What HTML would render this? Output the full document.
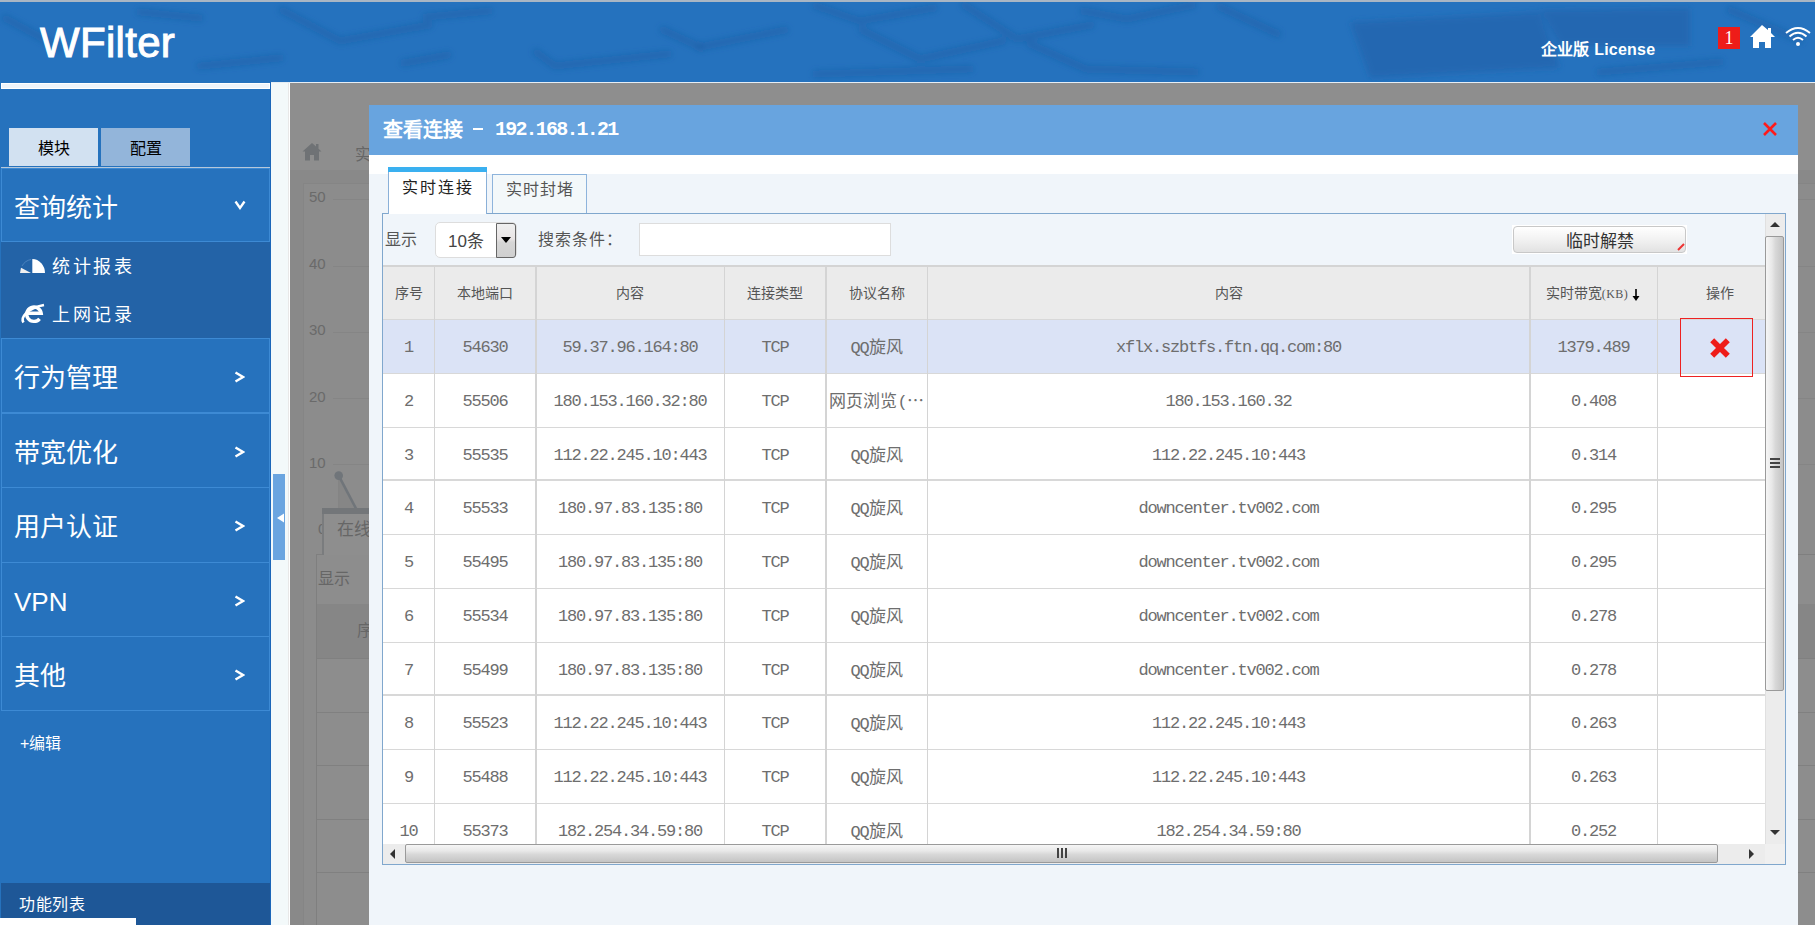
<!DOCTYPE html>
<html lang="zh-CN"><head><meta charset="utf-8">
<style>
*{box-sizing:border-box;margin:0;padding:0}
html,body{width:1815px;height:925px;overflow:hidden;background:#fff;font-family:"Liberation Sans",sans-serif}
.a{position:absolute}
#topline{left:0;top:0;width:1815px;height:2px;background:#a9b6c4}
#hdr{left:0;top:2px;width:1815px;height:80px;background:#2572be;overflow:hidden}
#logo{left:40px;top:16px;font:42px/50px "Liberation Sans",sans-serif;color:#fff;-webkit-text-stroke:1px #fff;letter-spacing:0.3px}
#lic{left:1541px;top:38px;font:bold 16px/20px "Liberation Sans",sans-serif;color:#fff;letter-spacing:0.2px}
#badge{left:1718px;top:25px;width:22px;height:22px;background:#ee1c19;color:#fff;font:18px/22px "Liberation Serif",serif;text-align:center}
#side{left:0;top:82px;width:271px;height:843px;background:#2672bd}
#side .edge{left:270px;top:0;width:1px;height:843px;background:#1c66b8}
#wbar{left:1px;top:1px;width:269px;height:6px;background:#eef4fa;border:1px solid #fff}
.stab{top:46px;height:38px;font-size:16px;line-height:42px;text-align:center;color:#000}
.mi{left:1px;width:269px;border:1px solid #3d8ad4;color:#fff;font-size:26px}
.mi .t{left:12px;top:3px;line-height:72px;white-space:nowrap}
.mi svg{position:absolute}
#sub{left:1px;top:160px;width:269px;height:96px;background:#2363a7}
.si{left:52px;font-size:18px;color:#fff;letter-spacing:2.5px;line-height:20px}
#gray{left:290px;top:83px;width:1525px;height:842px;background:#898989;overflow:hidden;z-index:0}
#strip{left:271px;top:82px;width:19px;height:843px;background:#f3f9fa}
#handle{left:273px;top:474px;width:12px;height:86px;background:#6ba5e0}
#dlg{left:369px;top:105px;width:1429px;height:820px;background:#f0f5fa}
#dtitle{left:0;top:0;width:1429px;height:50px;background:#68a4df;color:#fff}
#dwhite{left:0;top:50px;width:1429px;height:19px;background:#fff}
#panel{left:13px;top:108px;width:1404px;height:652px;border:1px solid #80a7cd;background:#f0f5fa}
#tbl{left:383px;top:265px;width:1382px;height:579px;overflow:hidden;background:#fff}
.th{position:absolute;top:2px;height:52px;line-height:52px;text-align:center;font-size:14px;color:#555;white-space:nowrap}
.tr{position:absolute;left:0;width:1382px;height:53.74px;border-top:1px solid #d8d8d8;background:#fff}
.tr.hl{background:#dbe3f6}
.td{position:absolute;height:53.74px;line-height:57px;text-align:center;color:#6e6e6e;white-space:nowrap;overflow:hidden}
.td{font-family:"Liberation Mono",monospace;font-size:17px;letter-spacing:-1.2px}
.td u{text-decoration:none;letter-spacing:0;font-size:17px;font-family:"Liberation Sans",sans-serif}
.vl{position:absolute;top:2px;height:600px;width:1px;background:#d4d4d4}
.kb{font:12px "Liberation Serif",serif;letter-spacing:0.5px}
</style></head><body>
<div id="topline" class="a"></div>
<div id="hdr" class="a">
  <svg class="a" style="left:0;top:-2px" width="1815" height="84" viewBox="0 0 1815 84">
    <defs><filter id="bl" x="-5%" y="-50%" width="110%" height="200%"><feGaussianBlur stdDeviation="3.2"/></filter></defs>
    <g filter="url(#bl)" stroke="#1a5598" stroke-opacity="0.38" stroke-width="7" fill="none" stroke-linecap="round" stroke-linejoin="round"><path d="M5 18 L60 48"/><path d="M140 12 L200 18"/><path d="M200 66 L280 58"/><path d="M282 10 L340 41 L429 25"/><path d="M426 17 L489 11"/><path d="M404 63 L448 55"/><path d="M536 52 L555 66 L668 54"/><path d="M663 30 L700 47"/><path d="M700 47 L785 30"/><path d="M816 6 L860 21 L934 8"/><path d="M862 30 L920 59 L1003 41"/><path d="M964 5 L1017 39 L1091 25"/><path d="M1083 11 L1127 19 L1193 5"/><path d="M1030 44 L1086 69 L1196 72"/><path d="M816 74 L970 69"/><path d="M1220 7 L1278 34"/><path d="M1600 72 L1720 62"/><path d="M1730 10 L1800 40"/></g>
    <g filter="url(#bl)" fill="#1d5ea6" fill-opacity="0.5"><path d="M1350 22 L1540 12 L1560 68 L1370 78 Z"/><path d="M1540 10 L1690 8 L1690 46 L1560 46 Z"/></g>
  </svg>
  <div id="logo" class="a">WFilter</div>
  <div id="lic" class="a">企业版 License</div>
  <div id="badge" class="a">1</div>
  <svg class="a" style="left:1749px;top:21px" width="27" height="26" viewBox="0 0 27 26">
    <path d="M13 2 L1 14 L4 14 L4 25 L10 25 L10 19 L16 19 L16 25 L22 25 L22 14 L26 14 L22 10 L22 5 L19 5 L19 7 Z" fill="#fff"/>
  </svg>
  <svg class="a" style="left:1784px;top:23px" width="28" height="22" viewBox="0 0 28 22">
    <path d="M2 8 Q14 -2 26 8" stroke="#fff" stroke-width="1.9" fill="none"/>
    <path d="M5.5 11.5 Q14 4 22.5 11.5" stroke="#fff" stroke-width="1.9" fill="none"/>
    <path d="M9 15 Q14 10.5 19 15" stroke="#fff" stroke-width="1.9" fill="none"/>
    <circle cx="14" cy="19" r="2" fill="#fff"/>
  </svg>
</div>

<div id="side" class="a">
  <div class="a edge"></div>
  <div id="wbar" class="a"></div>
  <div class="a stab" style="left:9px;width:89px;background:#d2e1f1">模块</div>
  <div class="a stab" style="left:101px;width:89px;background:#93b5da">配置</div>
  <div class="a" style="left:1px;top:85px;width:269px;height:1px;background:#b6c8da"></div>
  <div class="a mi" style="top:86px;height:74px"><div class="a t">查询统计</div>
    <svg style="left:232px;top:31px" width="12" height="10"><polyline points="1.5,1.5 6,8 10.5,1.5" stroke="#fff" stroke-width="2.3" fill="none"/></svg></div>
  <div id="sub" class="a"></div>
  <div class="a si" style="top:175px">统计报表</div>
  <svg class="a" style="left:15px;top:168px" width="35" height="80" viewBox="15 250 35 80">
    <path d="M32.3 273 V259 A13 14 0 0 1 45 273 Z" fill="#fff"/>
    <path d="M20 273 L21 267.8 L31 273 Z" fill="#f0f0f0"/>
    <path d="M22 266 A13 14 0 0 1 31 259.5" stroke="#5b8fc7" stroke-width="0.7" fill="none"/>
    <path d="M27.2 313.2 H41.2 A7.3 7.2 0 1 0 39.6 318.8" stroke="#fff" stroke-width="3.4" fill="none"/>
    <path d="M23.5 322.5 C20.5 318 26 308.5 44 305" stroke="#fff" stroke-width="2.6" fill="none"/>
  </svg>
  <div class="a si" style="top:223px">上网记录</div>
  
  <div class="a mi" style="top:256px;height:75px"><div class="a t">行为管理</div>
    <svg style="left:232px;top:32px" width="11" height="12"><polyline points="1.5,1.5 9,6 1.5,10.5" stroke="#fff" stroke-width="2.4" fill="none"/></svg></div>
  <div class="a mi" style="top:331px;height:75px"><div class="a t">带宽优化</div>
    <svg style="left:232px;top:32px" width="11" height="12"><polyline points="1.5,1.5 9,6 1.5,10.5" stroke="#fff" stroke-width="2.4" fill="none"/></svg></div>
  <div class="a mi" style="top:405px;height:76px"><div class="a t">用户认证</div>
    <svg style="left:232px;top:32px" width="11" height="12"><polyline points="1.5,1.5 9,6 1.5,10.5" stroke="#fff" stroke-width="2.4" fill="none"/></svg></div>
  <div class="a mi" style="top:480px;height:75px"><div class="a t">VPN</div>
    <svg style="left:232px;top:32px" width="11" height="12"><polyline points="1.5,1.5 9,6 1.5,10.5" stroke="#fff" stroke-width="2.4" fill="none"/></svg></div>
  <div class="a mi" style="top:554px;height:75px"><div class="a t">其他</div>
    <svg style="left:232px;top:32px" width="11" height="12"><polyline points="1.5,1.5 9,6 1.5,10.5" stroke="#fff" stroke-width="2.4" fill="none"/></svg></div>
  <div class="a" style="left:20px;top:652px;font-size:16px;color:#fff;line-height:20px">+编辑</div>
  <div class="a" style="left:1px;top:801px;width:269px;height:42px;background:#1e5797"></div>
  <div class="a" style="left:19px;top:813px;letter-spacing:0.6px;font-size:16px;color:#fff;line-height:20px">功能列表</div>
  <div class="a" style="left:0;top:836px;width:136px;height:7px;background:#fff"></div>
</div>

<div id="strip" class="a"></div>
<div class="a" style="left:271px;top:82px;width:1544px;height:1px;background:#e6eef5"></div>
<div class="a" style="left:288px;top:83px;width:1px;height:842px;background:#e8e8e8"></div>
<div class="a" style="left:289px;top:83px;width:1px;height:842px;background:#fff"></div>
<div id="handle" class="a"></div>
<svg class="a" style="left:276px;top:513px" width="9" height="10"><path d="M8 0.5 L1 5 L8 9.5 Z" fill="#fff"/></svg>

<div id="gray" class="a">
  <div class="a" style="left:0;top:0;width:1525px;height:87px;background:#8e8e8e"></div>
  <svg class="a" style="left:12px;top:59px" width="20" height="19" viewBox="0 0 20 19"><path d="M10 1 L0.5 9.5 L3 9.5 L3 18.5 L8 18.5 L8 13 L12 13 L12 18.5 L17 18.5 L17 9.5 L19.5 9.5 L16.5 6.8 L16.5 2 L14 2 L14 4.5 Z" fill="#6f7275"/></svg>
  <div class="a" style="left:65px;top:62px;font-size:16px;line-height:20px;color:#666">实</div>
  <div class="a" style="left:0;top:87px;width:1525px;height:755px;background:#898989"></div>
  <div class="a" style="left:13px;top:100px;width:1512px;height:742px;background:#8c8c8c;border-left:1px solid #858585;border-top:1px solid #858585"></div>
  <div class="a" style="left:43px;top:116.0px;width:1482px;height:1px;background:#858585"></div><div class="a" style="left:43px;top:182.6px;width:1482px;height:1px;background:#858585"></div><div class="a" style="left:43px;top:249.0px;width:1482px;height:1px;background:#858585"></div><div class="a" style="left:43px;top:315.0px;width:1482px;height:1px;background:#858585"></div><div class="a" style="left:43px;top:380.6px;width:1482px;height:1px;background:#858585"></div>
  <div class="a" style="left:19px;top:106px;font-size:15px;line-height:16px;color:#6a6a6a">50</div><div class="a" style="left:19px;top:173px;font-size:15px;line-height:16px;color:#6a6a6a">40</div><div class="a" style="left:19px;top:239px;font-size:15px;line-height:16px;color:#6a6a6a">30</div><div class="a" style="left:19px;top:306px;font-size:15px;line-height:16px;color:#6a6a6a">20</div><div class="a" style="left:19px;top:372px;font-size:15px;line-height:16px;color:#6a6a6a">10</div><div class="a" style="left:28px;top:438px;font-size:15px;line-height:16px;color:#6a6a6a">0</div>
  <svg class="a" style="left:40px;top:385px" width="40" height="45"><path d="M8.7 7.6 L26 40.5 L8.7 40.5 Z" fill="#868686"/><path d="M8.7 7.6 V40" stroke="#828282" stroke-width="0.8"/><path d="M8.7 7.6 L26 40.5" stroke="#70757a" stroke-width="2.6"/><circle cx="8.7" cy="7.6" r="4.3" fill="#70757a"/></svg>
  <div class="a" style="left:32px;top:431px;width:120px;height:41px;background:#8e8e8e;border-left:2px solid #7a7c7e;z-index:2"></div>
  <div class="a" style="left:32px;top:425px;width:120px;height:6px;background:#737679"></div>
  <div class="a" style="left:47px;top:436px;font-size:17px;line-height:22px;color:#666;z-index:3">在线</div>
  <div class="a" style="left:26px;top:471px;width:1499px;height:371px;background:#8d8d8d;border-left:1px solid #7f7f7f;border-top:1px solid #7f7f7f"></div>
  <div class="a" style="left:28px;top:486px;font-size:16px;line-height:20px;color:#666">显示</div>
  <div class="a" style="left:27px;top:521px;width:1498px;height:54px;background:#868686"></div>
  <div class="a" style="left:67px;top:538px;font-size:16px;line-height:20px;color:#666">序</div>
  <div class="a" style="left:27px;top:575.0px;width:1498px;height:1px;background:#808080"></div><div class="a" style="left:27px;top:628.5px;width:1498px;height:1px;background:#808080"></div><div class="a" style="left:27px;top:682.0px;width:1498px;height:1px;background:#808080"></div><div class="a" style="left:27px;top:736.4px;width:1498px;height:1px;background:#808080"></div><div class="a" style="left:27px;top:789.4px;width:1498px;height:1px;background:#808080"></div>
</div>

<div id="dlg" class="a">
  <div id="dtitle" class="a">
    <div class="a" style="left:14px;top:11px;font:bold 20px/28px 'Liberation Sans',sans-serif;white-space:nowrap">查看连接</div>
    <div class="a" style="left:104px;top:12px;width:10px;height:2px;top:23px;background:#fff"></div>
    <div class="a" style="left:126px;top:11px;font:bold 20px/28px 'Liberation Mono',monospace;letter-spacing:-1.8px;white-space:nowrap">192.168.1.21</div>
    <svg class="a" style="left:1393px;top:16px" width="16" height="16" viewBox="0 0 16 16"><path d="M2 2 L14 14 M14 2 L2 14" stroke="#ff1a1a" stroke-width="2.6"/></svg>
  </div>
  <div id="dwhite" class="a"></div>
  <div id="panel" class="a"></div>
  <div class="a" style="left:19px;top:62px;width:99px;height:47px;background:#fff;border-left:1px solid #8ab0d8;border-right:1px solid #8ab0d8"></div>
  <div class="a" style="left:19px;top:62px;width:99px;height:5px;background:#3ab0f0"></div>
  <div class="a" style="left:123px;top:69px;width:95px;height:39px;background:#f3f8fa;border:1px solid #8eb4dc;border-bottom:none"></div>
  <div class="a" style="left:33px;top:73px;font-size:16px;line-height:20px;letter-spacing:2px;color:#222;white-space:nowrap">实时连接</div>
  <div class="a" style="left:137px;top:75px;font-size:16px;line-height:20px;letter-spacing:1px;color:#555;white-space:nowrap">实时封堵</div>
</div>
<div class="a" style="left:385px;top:230px;font-size:16px;line-height:20px;color:#555">显示</div>
<div class="a" style="left:435px;top:222px;width:82px;height:36px;border:1px solid #ddd;border-radius:5px;background:#fff"></div>
<div class="a" style="left:448px;top:232px;font-size:17px;line-height:20px;color:#444">10条</div>
<div class="a" style="left:496px;top:223px;width:20px;height:35px;border:1px solid #666;border-radius:0 3px 3px 0;background:linear-gradient(#f0f0f0,#e8e4e4 45%,#d6d6d6 55%,#cfcfcf)"></div>
<svg class="a" style="left:500px;top:236px" width="12" height="8"><path d="M1 1 L11 1 L6 7 Z" fill="#000"/></svg>
<div class="a" style="left:538px;top:230px;font-size:16px;line-height:20px;letter-spacing:1px;color:#555;white-space:nowrap">搜索条件：</div>
<div class="a" style="left:639px;top:223px;width:252px;height:33px;border:1px solid #ddd;background:#fff"></div>
<div class="a" style="left:1512px;top:225px;width:175px;height:29px;background:#fff"></div>
<div class="a" style="left:1513px;top:226px;width:173px;height:27px;border:1px solid #c8c8c8;border-radius:4px;background:linear-gradient(#ffffff,#f2f2f2 50%,#e2e2e2);font-size:17px;line-height:29px;text-align:center;color:#333">临时解禁</div>
<svg class="a" style="left:1677px;top:241px" width="8" height="10"><path d="M1 9 L7 3" stroke="#e33" stroke-width="2"/></svg>
<!-- v scrollbar -->
<div class="a" style="left:1765px;top:214px;width:20px;height:630px;background:#ececec;border-left:1px solid #e0e0e0"></div>
<svg class="a" style="left:1769px;top:220px" width="12" height="8"><path d="M1 7 L6 2 L11 7 Z" fill="#333"/></svg>
<div class="a" style="left:1765px;top:236px;width:19px;height:455px;border:1px solid #9a9a9a;border-radius:2px;background:linear-gradient(90deg,#f6f6f6,#e8e8e8 35%,#d8d8d8 55%,#c4c4c4)"></div>
<div class="a" style="left:1770px;top:458px;width:10px;height:1.5px;background:#444"></div>
<div class="a" style="left:1770px;top:462px;width:10px;height:1.5px;background:#444"></div>
<div class="a" style="left:1770px;top:466px;width:10px;height:1.5px;background:#444"></div>
<svg class="a" style="left:1769px;top:829px" width="12" height="8"><path d="M1 1 L11 1 L6 6 Z" fill="#333"/></svg>
<!-- h scrollbar -->
<div class="a" style="left:383px;top:844px;width:1402px;height:20px;background:#ececec"></div>
<svg class="a" style="left:388px;top:848px" width="8" height="12"><path d="M7 1 L2 6 L7 11 Z" fill="#333"/></svg>
<div class="a" style="left:405px;top:844px;width:1313px;height:19px;border:1px solid #9a9a9a;border-radius:2px;background:linear-gradient(#f6f6f6,#e8e8e8 35%,#d8d8d8 55%,#c4c4c4)"></div>
<div class="a" style="left:1057px;top:848px;width:1.5px;height:10px;background:#444"></div>
<div class="a" style="left:1061px;top:848px;width:1.5px;height:10px;background:#444"></div>
<div class="a" style="left:1065px;top:848px;width:1.5px;height:10px;background:#444"></div>
<svg class="a" style="left:1748px;top:848px" width="8" height="12"><path d="M1 1 L6 6 L1 11 Z" fill="#333"/></svg>
<div class="a" style="left:1765px;top:844px;width:20px;height:20px;background:#f0f0f0"></div>

<div id="tbl" class="a">
  <div class="a" style="left:0;top:0;width:1382px;height:2px;background:#d4d4d4"></div>
  <div class="a" style="left:0;top:2px;width:1382px;height:52px;background:#ebebeb"></div>
<div class="th" style="left:0px;width:51px">序号</div>
<div class="th" style="left:51px;width:102px">本地端口</div>
<div class="th" style="left:153px;width:188px">内容</div>
<div class="th" style="left:341px;width:102px">连接类型</div>
<div class="th" style="left:443px;width:101px">协议名称</div>
<div class="th" style="left:544px;width:603px">内容</div>
<div class="th" style="left:1147px;width:127px">实时带宽<span class='kb'>(KB)</span><svg width='10' height='14' style='vertical-align:-4px;margin-left:3px'><path d='M5 1 V11' stroke='#000' stroke-width='1.6'/><path d='M1.5 8 L5 13 L8.5 8 Z' fill='#000'/></svg></div>
<div class="th" style="left:1274px;width:126px">操作</div>
<div class="tr hl" style="top:54.00px"></div>
<div class="td" style="left:0px;width:51px;top:54.00px">1</div>
<div class="td" style="left:51px;width:102px;top:54.00px">54630</div>
<div class="td" style="left:153px;width:188px;top:54.00px">59.37.96.164:80</div>
<div class="td" style="left:341px;width:102px;top:54.00px">TCP</div>
<div class="td" style="left:443px;width:101px;top:54.00px">QQ<u>旋</u><u>风</u></div>
<div class="td" style="left:544px;width:603px;top:54.00px">xflx.szbtfs.ftn.qq.com:80</div>
<div class="td" style="left:1147px;width:127px;top:54.00px">1379.489</div>
<div class="tr" style="top:107.78px"></div>
<div class="td" style="left:0px;width:51px;top:107.78px">2</div>
<div class="td" style="left:51px;width:102px;top:107.78px">55506</div>
<div class="td" style="left:153px;width:188px;top:107.78px">180.153.160.32:80</div>
<div class="td" style="left:341px;width:102px;top:107.78px">TCP</div>
<div class="td" style="left:443px;width:101px;top:107.78px"><u>网</u><u>页</u><u>浏</u><u>览</u>(<u>⋯</u></div>
<div class="td" style="left:544px;width:603px;top:107.78px">180.153.160.32</div>
<div class="td" style="left:1147px;width:127px;top:107.78px">0.408</div>
<div class="tr" style="top:161.56px"></div>
<div class="td" style="left:0px;width:51px;top:161.56px">3</div>
<div class="td" style="left:51px;width:102px;top:161.56px">55535</div>
<div class="td" style="left:153px;width:188px;top:161.56px">112.22.245.10:443</div>
<div class="td" style="left:341px;width:102px;top:161.56px">TCP</div>
<div class="td" style="left:443px;width:101px;top:161.56px">QQ<u>旋</u><u>风</u></div>
<div class="td" style="left:544px;width:603px;top:161.56px">112.22.245.10:443</div>
<div class="td" style="left:1147px;width:127px;top:161.56px">0.314</div>
<div class="tr" style="top:215.34px;border-top-width:2px;margin-top:-1px;height:54.74px"></div>
<div class="td" style="left:0px;width:51px;top:215.34px">4</div>
<div class="td" style="left:51px;width:102px;top:215.34px">55533</div>
<div class="td" style="left:153px;width:188px;top:215.34px">180.97.83.135:80</div>
<div class="td" style="left:341px;width:102px;top:215.34px">TCP</div>
<div class="td" style="left:443px;width:101px;top:215.34px">QQ<u>旋</u><u>风</u></div>
<div class="td" style="left:544px;width:603px;top:215.34px">downcenter.tv002.com</div>
<div class="td" style="left:1147px;width:127px;top:215.34px">0.295</div>
<div class="tr" style="top:269.12px"></div>
<div class="td" style="left:0px;width:51px;top:269.12px">5</div>
<div class="td" style="left:51px;width:102px;top:269.12px">55495</div>
<div class="td" style="left:153px;width:188px;top:269.12px">180.97.83.135:80</div>
<div class="td" style="left:341px;width:102px;top:269.12px">TCP</div>
<div class="td" style="left:443px;width:101px;top:269.12px">QQ<u>旋</u><u>风</u></div>
<div class="td" style="left:544px;width:603px;top:269.12px">downcenter.tv002.com</div>
<div class="td" style="left:1147px;width:127px;top:269.12px">0.295</div>
<div class="tr" style="top:322.90px"></div>
<div class="td" style="left:0px;width:51px;top:322.90px">6</div>
<div class="td" style="left:51px;width:102px;top:322.90px">55534</div>
<div class="td" style="left:153px;width:188px;top:322.90px">180.97.83.135:80</div>
<div class="td" style="left:341px;width:102px;top:322.90px">TCP</div>
<div class="td" style="left:443px;width:101px;top:322.90px">QQ<u>旋</u><u>风</u></div>
<div class="td" style="left:544px;width:603px;top:322.90px">downcenter.tv002.com</div>
<div class="td" style="left:1147px;width:127px;top:322.90px">0.278</div>
<div class="tr" style="top:376.68px"></div>
<div class="td" style="left:0px;width:51px;top:376.68px">7</div>
<div class="td" style="left:51px;width:102px;top:376.68px">55499</div>
<div class="td" style="left:153px;width:188px;top:376.68px">180.97.83.135:80</div>
<div class="td" style="left:341px;width:102px;top:376.68px">TCP</div>
<div class="td" style="left:443px;width:101px;top:376.68px">QQ<u>旋</u><u>风</u></div>
<div class="td" style="left:544px;width:603px;top:376.68px">downcenter.tv002.com</div>
<div class="td" style="left:1147px;width:127px;top:376.68px">0.278</div>
<div class="tr" style="top:430.46px;border-top-width:2px;margin-top:-1px;height:54.74px"></div>
<div class="td" style="left:0px;width:51px;top:430.46px">8</div>
<div class="td" style="left:51px;width:102px;top:430.46px">55523</div>
<div class="td" style="left:153px;width:188px;top:430.46px">112.22.245.10:443</div>
<div class="td" style="left:341px;width:102px;top:430.46px">TCP</div>
<div class="td" style="left:443px;width:101px;top:430.46px">QQ<u>旋</u><u>风</u></div>
<div class="td" style="left:544px;width:603px;top:430.46px">112.22.245.10:443</div>
<div class="td" style="left:1147px;width:127px;top:430.46px">0.263</div>
<div class="tr" style="top:484.24px"></div>
<div class="td" style="left:0px;width:51px;top:484.24px">9</div>
<div class="td" style="left:51px;width:102px;top:484.24px">55488</div>
<div class="td" style="left:153px;width:188px;top:484.24px">112.22.245.10:443</div>
<div class="td" style="left:341px;width:102px;top:484.24px">TCP</div>
<div class="td" style="left:443px;width:101px;top:484.24px">QQ<u>旋</u><u>风</u></div>
<div class="td" style="left:544px;width:603px;top:484.24px">112.22.245.10:443</div>
<div class="td" style="left:1147px;width:127px;top:484.24px">0.263</div>
<div class="tr" style="top:538.02px"></div>
<div class="td" style="left:0px;width:51px;top:538.02px">10</div>
<div class="td" style="left:51px;width:102px;top:538.02px">55373</div>
<div class="td" style="left:153px;width:188px;top:538.02px">182.254.34.59:80</div>
<div class="td" style="left:341px;width:102px;top:538.02px">TCP</div>
<div class="td" style="left:443px;width:101px;top:538.02px">QQ<u>旋</u><u>风</u></div>
<div class="td" style="left:544px;width:603px;top:538.02px">182.254.34.59:80</div>
<div class="td" style="left:1147px;width:127px;top:538.02px">0.252</div>
<div class="vl" style="left:51px"></div>
<div class="vl" style="left:152px;width:2px"></div>
<div class="vl" style="left:341px"></div>
<div class="vl" style="left:442px;width:2px"></div>
<div class="vl" style="left:544px"></div>
<div class="vl" style="left:1146px;width:2px"></div>
<div class="vl" style="left:1274px"></div>
  <div class="a" style="left:1297px;top:53px;width:73px;height:59px;border:1px solid #ee2222"></div>
  <svg class="a" style="left:1326px;top:72px" width="22" height="22" viewBox="0 0 22 22"><path d="M3.2 3.2 L18.8 18.8 M18.8 3.2 L3.2 18.8" stroke="#ee1c19" stroke-width="5.6"/></svg>
</div>
</body></html>
